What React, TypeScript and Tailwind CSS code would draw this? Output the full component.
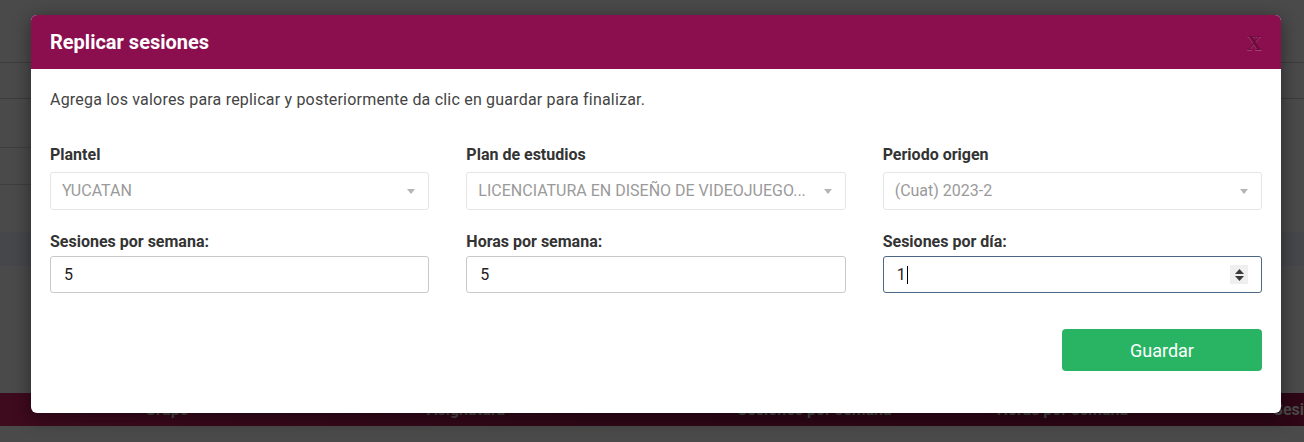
import React from "react";

function Caret() {
  return (
    <svg width="8" height="5" viewBox="0 0 8 5" className="shrink-0">
      <path d="M0 0 L8 0 L4 5 Z" fill="#b5b5b5" />
    </svg>
  );
}

function SelectBox({ text }: { text: string }) {
  return (
    <div className="flex h-[38px] items-center justify-between rounded-[3px] border border-[#e6e6e6] bg-white pl-[11px] pr-[13px]">
      <span className="whitespace-nowrap text-[16px] text-[#9a9a9a]">{text}</span>
      <Caret />
    </div>
  );
}

function InputBox({ value }: { value: string }) {
  return (
    <div className="flex h-[37px] items-center rounded-[3px] border border-[#c9c9c9] bg-white pl-[13px] text-[16px] text-[#222]">
      {value}
    </div>
  );
}

function Field({ label, children, top }: { label: string; children: React.ReactNode; top?: boolean }) {
  return (
    <div className="flex flex-col">
      <div className={`text-[16px] font-bold leading-[18px] text-[#333] ${top ? "mb-[8px]" : "mb-[5px]"}`}>{label}</div>
      {children}
    </div>
  );
}

export default function App() {
  return (
    <div
      className="relative h-[442px] w-[1304px] overflow-hidden bg-[#4a4a4a]"
      style={{ fontFamily: "Roboto, 'Liberation Sans', sans-serif" }}
    >
      {/* background page (dimmed) */}
      <div className="flex flex-col">
        <div className="h-[62px]" />
        <div className="h-[36px] border-t border-[#3c3c3c]" />
        <div className="h-[49px] border-t border-[#3c3c3c]" />
        <div className="h-[37px] w-[420px] border-t border-[#3e3e3e]" />
        <div className="h-[48px] w-[420px] border-t border-[#3e3e3e]" />
        <div className="h-[34px] bg-[#45474a]" />
        <div className="h-[127px]" />
        <div className="flex h-[33px] items-center whitespace-nowrap bg-gradient-to-r from-[#3e0a1e] via-[#2f0717] to-[#2e0616] text-[16px] font-bold text-[#4a4a4a]">
          <span className="ml-[145px]">Grupo</span>
          <span className="ml-[238px]">Asignatura</span>
          <span className="ml-[232px]">Sesiones por semana</span>
          <span className="ml-[105px]">Horas por semana</span>
          <span className="ml-[145px]">Sesiones por día</span>
        </div>
        <div className="flex-1 bg-[#444446]" />
      </div>

      {/* modal */}
      <div className="absolute left-[31px] top-[15px] flex h-[398px] w-[1250px] flex-col overflow-hidden rounded-[6px] bg-white shadow-[0_4px_18px_rgba(0,0,0,0.45)]">
        <div className="flex h-[54px] items-center justify-between bg-[#8b0f4e] pl-[19px] pr-[19px]">
          <span className="text-[20px] font-bold text-white">Replicar sesiones</span>
          <span
            className="mt-[3px] text-[21px] font-bold leading-none text-black opacity-20 [text-shadow:0_1px_0_#fff]"
            style={{ fontFamily: "'Liberation Serif', serif" }}
          >
            X
          </span>
        </div>
        <div className="flex flex-1 flex-col px-[19px] pt-[22px]">
          <p className="text-[16px] leading-[18px] tracking-[0.2px] text-[#444]">
            Agrega los valores para replicar y posteriormente da clic en guardar para finalizar.
          </p>
          <div className="mt-[37px] grid grid-cols-3 gap-x-[37px] gap-y-[23px]">
            <Field label="Plantel" top>
              <SelectBox text="YUCATAN" />
            </Field>
            <Field label="Plan de estudios" top>
              <SelectBox text="LICENCIATURA EN DISEÑO DE VIDEOJUEGO..." />
            </Field>
            <Field label="Periodo origen" top>
              <SelectBox text="(Cuat) 2023-2" />
            </Field>
            <Field label="Sesiones por semana:">
              <InputBox value="5" />
            </Field>
            <Field label="Horas por semana:">
              <InputBox value="5" />
            </Field>
            <Field label="Sesiones por día:">
              <div className="flex h-[37px] items-center justify-between rounded-[3px] border border-[#4d6787] bg-white pl-[13px] pr-[13px] text-[16px] text-[#222]">
                <span className="flex items-center">
                  1<span className="ml-[1px] inline-block h-[18px] w-px bg-black" />
                </span>
                <span className="flex h-[19px] w-[18px] flex-col items-center justify-center gap-[2px] bg-[#efefef]">
                  <svg width="9" height="5" viewBox="0 0 9 5">
                    <path d="M0 5 L4.5 0 L9 5 Z" fill="#3a3a3a" />
                  </svg>
                  <svg width="9" height="5" viewBox="0 0 9 5">
                    <path d="M0 0 L9 0 L4.5 5 Z" fill="#3a3a3a" />
                  </svg>
                </span>
              </div>
            </Field>
          </div>
          <div className="mt-[36px] flex justify-end">
            <button className="flex h-[42px] w-[200px] items-center justify-center rounded-[4px] bg-[#28b463] text-[18px] text-white">
              Guardar
            </button>
          </div>
        </div>
      </div>
    </div>
  );
}
